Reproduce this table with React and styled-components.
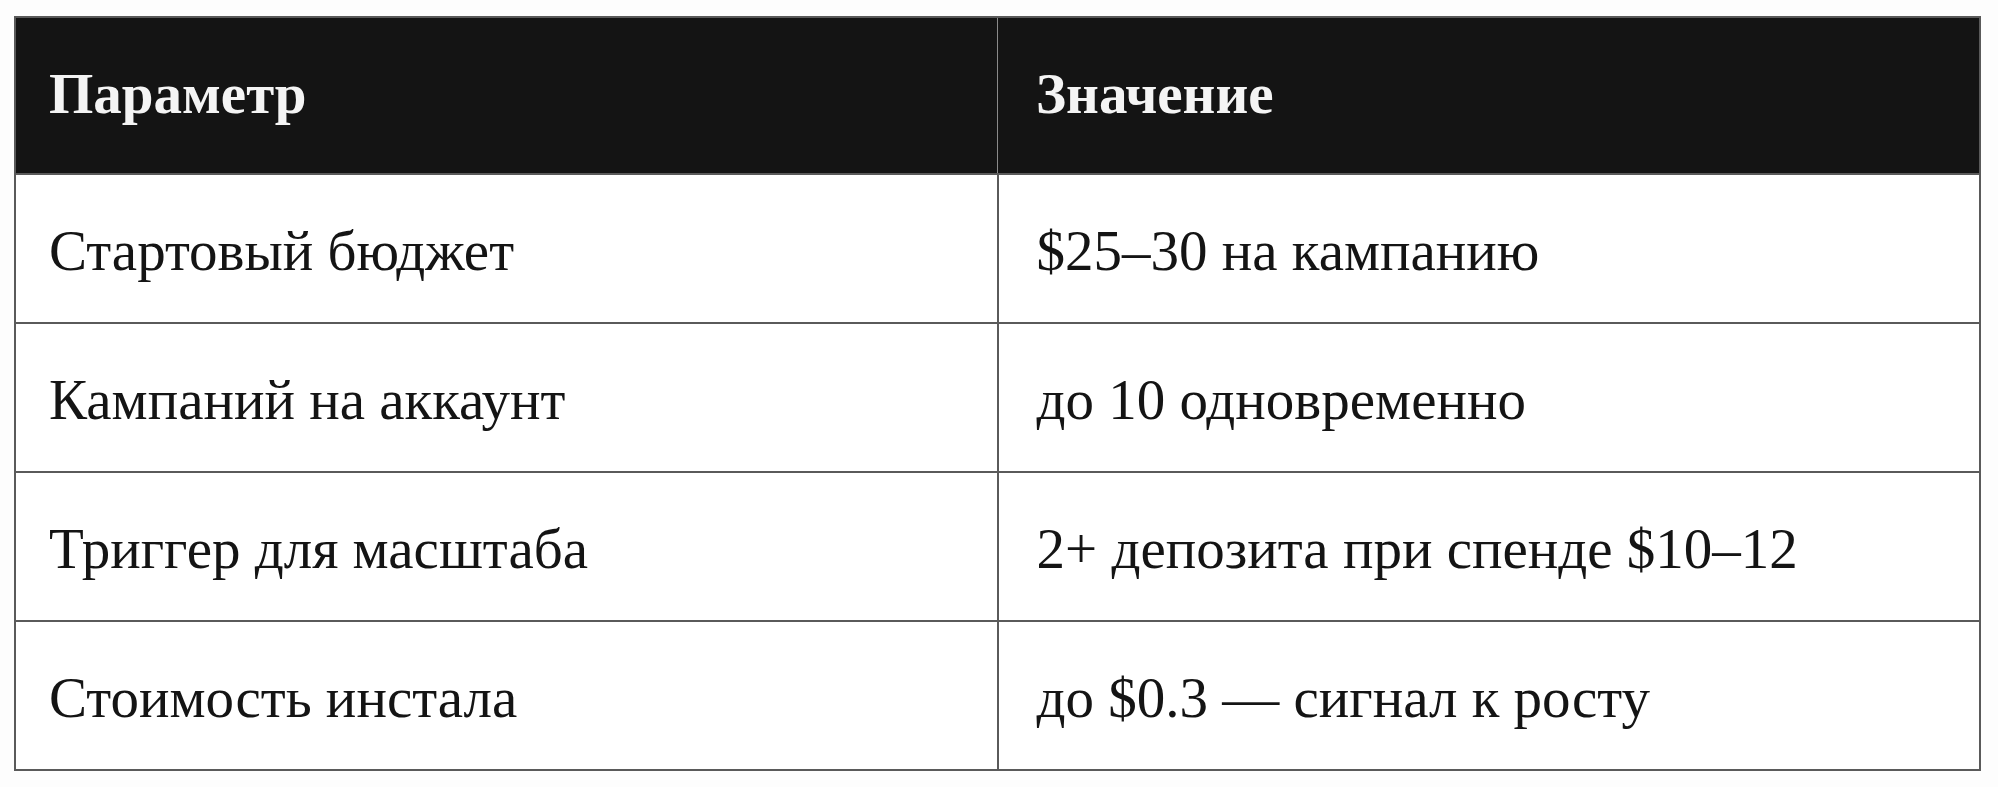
import React from "react";
import styled, { createGlobalStyle } from "styled-components";

const rows = [
  ["Стартовый бюджет", "$25–30 на кампанию"],
  ["Кампаний на аккаунт", "до 10 одновременно"],
  ["Триггер для масштаба", "2+ депозита при спенде $10–12"],
  ["Стоимость инстала", "до $0.3 — сигнал к росту"],
];

const App = () => {
  return (
    <Page>
      <GlobalStyle />
      <Table>
        <thead>
          <HeadRow>
            <HeadCell>Параметр</HeadCell>
            <HeadCell>Значение</HeadCell>
          </HeadRow>
        </thead>
        <tbody>
          {rows.map(([name, value]) => (
            <BodyRow key={name}>
              <Cell>{name}</Cell>
              <Cell>{value}</Cell>
            </BodyRow>
          ))}
        </tbody>
      </Table>
    </Page>
  );
};

const GlobalStyle = createGlobalStyle`
  html, body {
    margin: 0;
    background: #fdfdfd;
  }
`;
const Page = styled.div`
  padding: 16px 17px 16px 14px;
  font-family: "Liberation Serif", "Times New Roman", serif;
`;
const Table = styled.table`
  width: 100%;
  border-collapse: collapse;
  table-layout: fixed;
  border: 2px solid #5a5a5a;
`;
const HeadRow = styled.tr`
  height: 157px;
  background: #141414;
`;
const HeadCell = styled.th`
  text-align: left;
  color: #f4f4f4;
  font-weight: 700;
  font-size: 57px;
  padding: 0 0 4px 33px;
  border-left: 1px solid #8a8a8a;
  &:first-child {
    border-left: none;
  }
  & + & {
    padding-left: 38px;
  }
`;
const BodyRow = styled.tr`
  height: 149px;
  background: #ffffff;
  border-top: 2px solid #5a5a5a;
`;
const Cell = styled.td`
  color: #141414;
  font-size: 57px;
  padding: 4px 0 0 33px;
  border-left: 2px solid #5a5a5a;
  &:first-child {
    border-left: none;
  }
  & + & {
    padding-left: 38px;
  }
`;

export default App;
